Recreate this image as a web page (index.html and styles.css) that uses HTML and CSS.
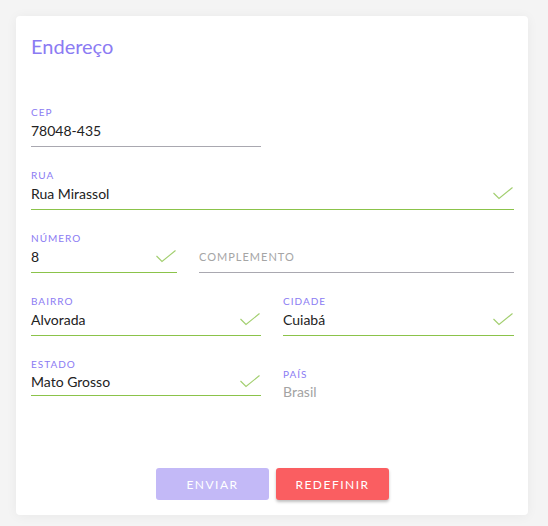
FILE: index.html
```html
<!DOCTYPE html>
<html lang="pt-BR">
<head>
<meta charset="utf-8">
<title>Endereço</title>
<link rel="stylesheet" href="styles.css">
</head>
<body>
<div class="card">
  <h1 class="title">Endereço</h1>
  <form class="form">
    <div class="row row-half">
      <div class="field">
        <label class="label">CEP</label>
        <div class="input">78048-435</div>
      </div>
    </div>
    <div class="row">
      <div class="field valid">
        <label class="label">Rua</label>
        <div class="input">Rua Mirassol<svg class="check" viewBox="0 0 20 13"><polyline points="0.5,6 6,11.5 19.5,0.5"/></svg></div>
      </div>
    </div>
    <div class="row row-num">
      <div class="field valid">
        <label class="label">Número</label>
        <div class="input">8<svg class="check" viewBox="0 0 20 13"><polyline points="0.5,6 6,11.5 19.5,0.5"/></svg></div>
      </div>
      <div class="field">
        <label class="label empty"></label>
        <div class="input placeholder"><span>Complemento</span></div>
      </div>
    </div>
    <div class="row row-two">
      <div class="field valid">
        <label class="label">Bairro</label>
        <div class="input">Alvorada<svg class="check" viewBox="0 0 20 13"><polyline points="0.5,6 6,11.5 19.5,0.5"/></svg></div>
      </div>
      <div class="field valid">
        <label class="label">Cidade</label>
        <div class="input">Cuiabá<svg class="check" viewBox="0 0 20 13"><polyline points="0.5,6 6,11.5 19.5,0.5"/></svg></div>
      </div>
    </div>
    <div class="row row-two row-last">
      <div class="field valid">
        <label class="label">Estado</label>
        <div class="input">Mato Grosso<svg class="check" viewBox="0 0 20 13"><polyline points="0.5,6 6,11.5 19.5,0.5"/></svg></div>
      </div>
      <div class="field disabled">
        <label class="label">País</label>
        <div class="input">Brasil</div>
      </div>
    </div>
    <div class="actions">
      <button type="button" class="btn btn-send">Enviar</button>
      <button type="button" class="btn btn-reset">Redefinir</button>
    </div>
  </form>
</div>
</body>
</html>
```

FILE: styles.css
```css
html, body {
  margin: 0;
  padding: 0;
}
body {
  background: #f4f4f4;
  font-family: "Lato", "Noto Sans", sans-serif;
  padding: 16px 20px 0 16px;
  height: 526px;
  box-sizing: border-box;
}
.card {
  background: #fff;
  width: 512px;
  height: 499px;
  box-sizing: border-box;
  padding: 0 14px 15px 15px;
  border-radius: 4px;
  box-shadow: 0 1px 12px rgba(0,0,0,0.05);
  display: flex;
  flex-direction: column;
}
.title {
  margin: 18px 0 0 0;
  font-size: 20px;
  font-weight: 400;
  line-height: 24px;
  color: #8b7bf3;
}
.form {
  display: flex;
  flex-direction: column;
  margin-top: 48px;
  flex: 1;
}
.row {
  display: grid;
  grid-template-columns: 1fr;
  column-gap: 22px;
  margin-bottom: 22px;
}
.row-half {
  grid-template-columns: 230px;
}
.row-num {
  grid-template-columns: 146px 1fr;
}
.row-two {
  grid-template-columns: 230px 1fr;
}
.field {
  display: flex;
  flex-direction: column;
}
.label {
  font-size: 10px;
  line-height: 12px;
  height: 12px;
  letter-spacing: 1px;
  text-transform: uppercase;
  color: #8b7bf3;
}
.input {
  position: relative;
  height: 28px;
  line-height: 26px;
  font-size: 14px;
  color: #222;
  border-bottom: 1px solid #a9a8b0;
  box-sizing: content-box;
}
.row-last .valid .input {
  height: 25px;
  line-height: 24px;
}
.row-last .valid .check {
  top: 5px;
}
.valid .input {
  border-bottom-color: #8bc34a;
}
.placeholder span {
  display: block;
  font-size: 11px;
  letter-spacing: 1px;
  text-transform: uppercase;
  color: #a5a5a5;
  line-height: 14px;
  margin-top: 6px;
}
.disabled {
  margin-top: 10px;
}
.disabled .input {
  border-bottom: none;
  color: #a3a3a3;
  height: 16px;
  line-height: 16px;
  margin-top: 4px;
}
.check {
  position: absolute;
  right: 1px;
  top: 6px;
  width: 20px;
  height: 13px;
  fill: none;
  stroke: #8bc34a;
  stroke-width: 1.1;
  opacity: 0.8;
}
.actions {
  margin-top: auto;
  display: flex;
  justify-content: center;
  gap: 7px;
}
.btn {
  width: 113px;
  height: 32px;
  border: none;
  border-radius: 3px;
  font-family: "Lato", "Noto Sans", sans-serif;
  font-size: 12px;
  letter-spacing: 1.5px;
  text-transform: uppercase;
  color: #fff;
  cursor: pointer;
}
.btn-send {
  background: #c3b9f7;
}
.btn-reset {
  background: #fa5e61;
  box-shadow: 0 2px 3px rgba(0,0,0,0.25);
}
```
